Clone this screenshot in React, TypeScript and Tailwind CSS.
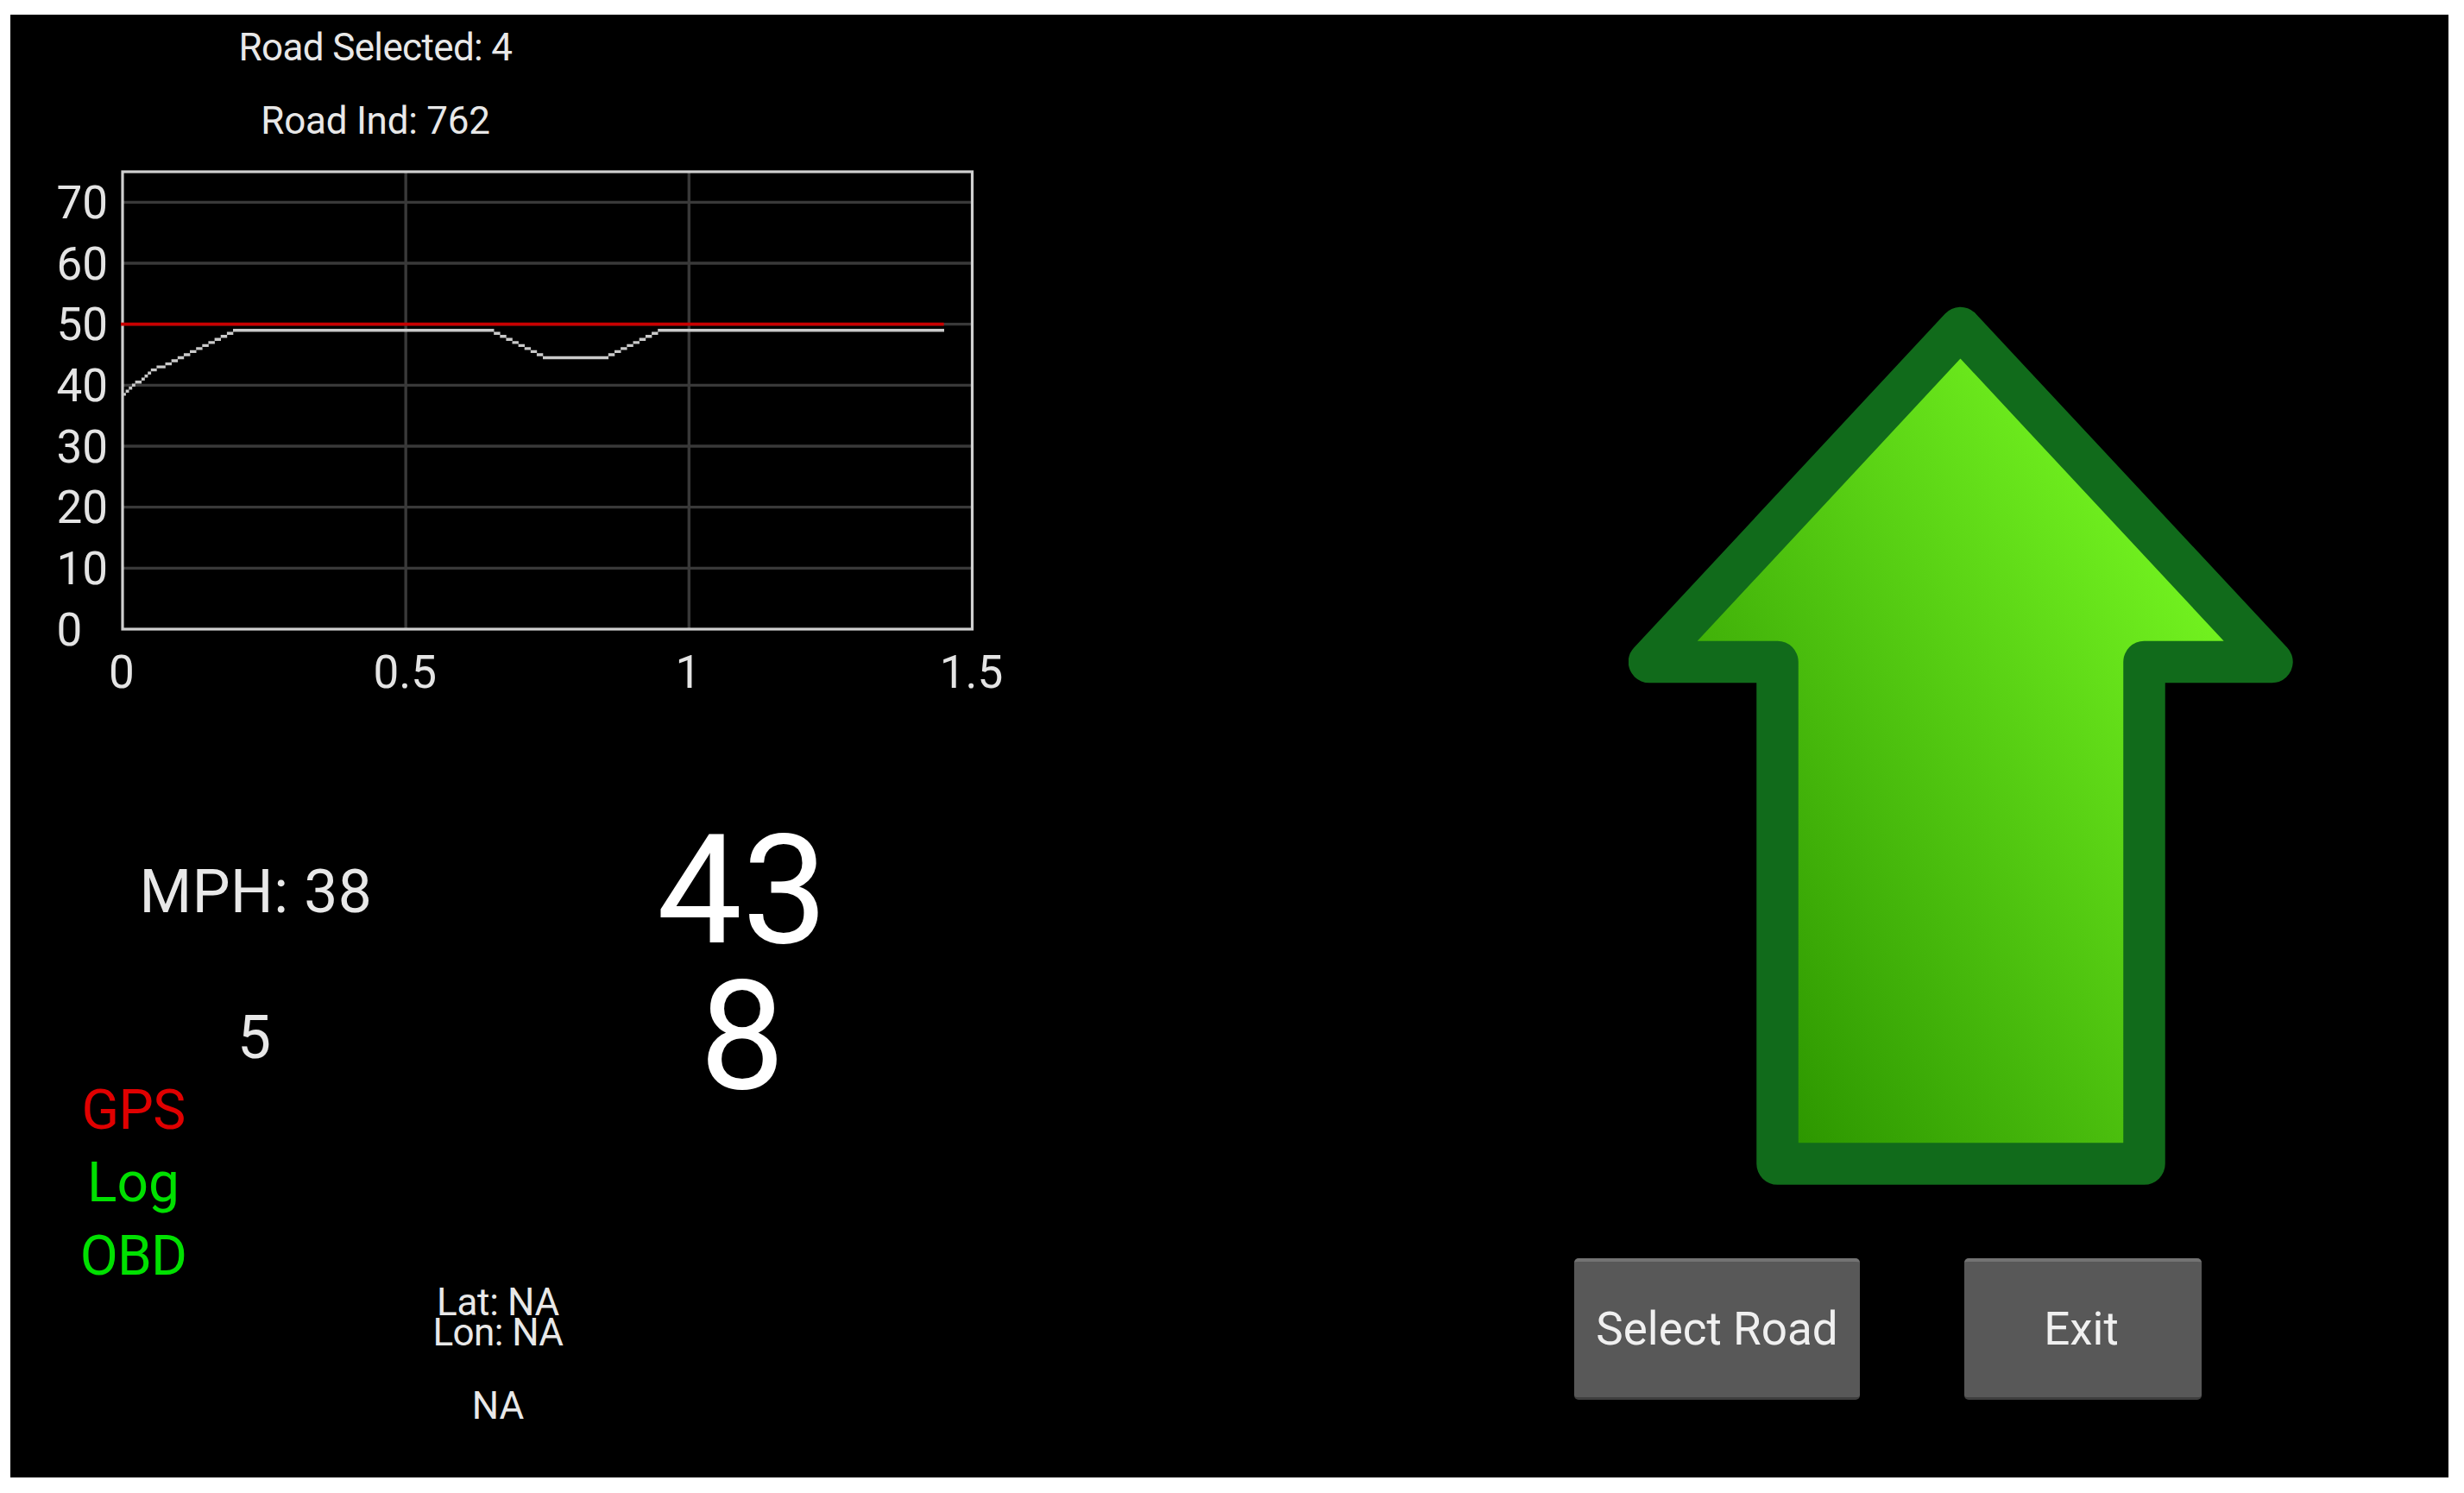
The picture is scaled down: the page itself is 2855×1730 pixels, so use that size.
const PLOT = { left: 130, right: 1114.5, top: 13, bottom: 543 };
const MAX_X = 1.5;
const MAX_Y = 75;
const DOT = 3.53;

const toX = (v: number) => PLOT.left + (v / MAX_X) * (PLOT.right - PLOT.left);
const toY = (v: number) => PLOT.bottom - (v / MAX_Y) * (PLOT.bottom - PLOT.top);

const speeds: [number, number][] = [
  [0, 38.4],
  [0.05, 42.6],
  [0.07, 43.1],
  [0.195, 49],
  [0.65, 49],
  [0.742, 44.5],
  [0.852, 44.5],
  [0.945, 49],
  [1.45, 49],
];

const yTicks = [70, 60, 50, 40, 30, 20, 10, 0];
const xTicks = [0, 0.5, 1, 1.5];

// Low-res line: one run per dot column (or per dot row on steep parts)
function steppedPath(points: [number, number][]) {
  let d = "";
  for (let i = 0; i < points.length - 1; i++) {
    const x0 = toX(points[i][0]);
    const y0 = toY(points[i][1]);
    const x1 = toX(points[i + 1][0]);
    const y1 = toY(points[i + 1][1]);
    const steps = Math.max(1, Math.round(Math.max(Math.abs(x1 - x0), Math.abs(y1 - y0)) / DOT));
    for (let s = 0; s < steps; s++) {
      const x = x0 + ((x1 - x0) * s) / steps;
      const y = y0 + ((y1 - y0) * s) / steps;
      const snapped = toY(49) + Math.round((y - toY(49)) / DOT) * DOT;
      d += `M${x.toFixed(1)} ${snapped.toFixed(1)}h${((x1 - x0) / steps + 0.3).toFixed(1)}`;
    }
  }
  return d;
}

function SpeedChart() {
  return (
    <svg className="block h-[634px] w-[1200px]" viewBox="0 0 1200 634" fontFamily="Roboto, sans-serif" fontSize="53" fill="#e4e4e4">
      <g stroke="#393939" strokeWidth="3.4">
        {yTicks.slice(0, -1).map((v) => (
          <line key={v} x1={PLOT.left} x2={PLOT.right} y1={toY(v)} y2={toY(v)} />
        ))}
        {[0.5, 1].map((v) => (
          <line key={v} x1={toX(v)} x2={toX(v)} y1={PLOT.top} y2={PLOT.bottom} />
        ))}
      </g>
      <rect
        x={PLOT.left}
        y={PLOT.top}
        width={PLOT.right - PLOT.left}
        height={PLOT.bottom - PLOT.top}
        fill="none"
        stroke="#d0d0d0"
        strokeWidth="3.2"
      />
      <line x1={128} x2={toX(1.45)} y1={toY(50)} y2={toY(50)} stroke="#c80000" strokeWidth="3.6" />
      <path d={steppedPath(speeds)} fill="none" stroke="#cacaca" strokeWidth="3.4" />
      {yTicks.map((v) => (
        <text key={v} x="53.5" y={toY(v) + 18.5}>
          {v}
        </text>
      ))}
      {xTicks.map((v) => (
        <text key={v} x={toX(v) - 1} y="611" textAnchor="middle">
          {v}
        </text>
      ))}
    </svg>
  );
}

function UpArrow() {
  return (
    <svg className="mt-[338px] ml-[675px] block h-[1019px] w-[770px]" viewBox="1887 355 770 1019">
      <defs>
        <linearGradient id="arrowFill" gradientUnits="userSpaceOnUse" x1="2084" y1="1324" x2="2716" y2="930">
          <stop offset="0" stopColor="#2d9700" />
          <stop offset="1" stopColor="#73f320" />
        </linearGradient>
      </defs>
      <path
        d="M2271.5 380L2632.5 767H2484.5V1348.5H2059.5V767H1911Z"
        fill="url(#arrowFill)"
        stroke="#116b1b"
        strokeWidth="48.5"
        strokeLinejoin="round"
      />
    </svg>
  );
}

function Button({ label, className }: { label: string; className: string }) {
  return (
    <button
      className={`h-[164px] rounded-[5px] border-t-[4px] border-b-[3px] border-t-[#737373] border-b-[#3e3e3e] bg-[#585858] text-[53px] leading-none text-[#f0f0f0] ${className}`}
    >
      {label}
    </button>
  );
}

export default function App() {
  return (
    <div className="h-[1730px] w-[2855px] bg-white pt-[17px] pl-[12px] font-['Roboto',sans-serif] whitespace-nowrap">
      <div className="flex h-[1695px] w-[2825px] bg-black text-[#e8e8e8]">
        <div className="flex w-[1200px] flex-col">
          <div className="flex w-[846px] flex-col text-[44px] leading-none">
            <div className="flex h-[76px] items-center justify-center">
              <span className="tracking-[-0.65px]">Road Selected: 4</span>
            </div>
            <div className="flex h-[93px] items-center justify-center">
              <span className="tracking-[-0.25px]">Road Ind: 762</span>
            </div>
          </div>

          <SpeedChart />

          <div className="mt-[86.5px] grid grid-cols-[569px_558px] grid-rows-[255px_83px] items-center justify-items-center leading-none">
            <span className="text-[69.5px] tracking-[0.5px]">MPH: 38</span>
            <span className="pb-[4px] text-[176px] text-white">43</span>
            <span className="pr-[4px] text-[69.5px]">5</span>
            <span className="pb-[4px] text-[176px] text-white">8</span>
          </div>

          <div className="flex w-[285px] flex-col text-center text-[64px] leading-[84.75px]">
            <span className="tracking-[-0.6px] text-[#e00000]">GPS</span>
            <span className="text-[#00e000]">Log</span>
            <span className="tracking-[-0.8px] text-[#00e000]">OBD</span>
          </div>

          <div className="-mt-[7px] flex w-[1130px] flex-col text-center text-[44px] leading-[35px]">
            <span className="tracking-[-0.3px]">Lat: NA</span>
            <span className="tracking-[-0.6px]">Lon: NA</span>
            <span className="leading-[135px]">NA</span>
          </div>
        </div>

        <div className="flex flex-1 flex-col">
          <UpArrow />
          <div className="mt-[84px] ml-[612px] flex gap-[121px]">
            <Button label="Select Road" className="w-[331px]" />
            <Button label="Exit" className="w-[275px] pr-[4px]" />
          </div>
        </div>
      </div>
    </div>
  );
}
